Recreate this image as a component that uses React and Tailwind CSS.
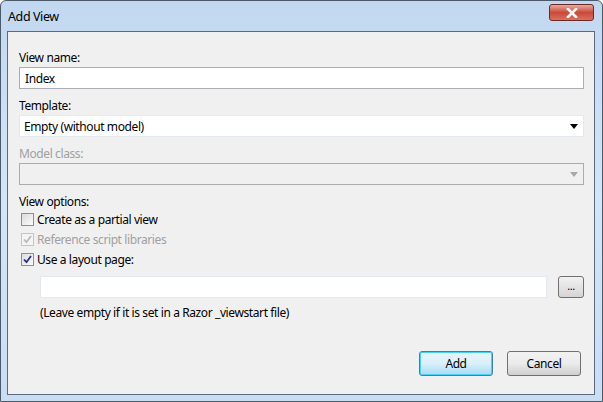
import React from "react";

const font = { fontFamily: '"Noto Sans", "Open Sans", sans-serif' };

function Arrow({ color }) {
  return (
    <svg width="8" height="5" viewBox="0 0 8 5" className="shrink-0">
      <path d="M0 0 H8 L4 5 Z" fill={color} />
    </svg>
  );
}

function Checkbox({ checked, disabled }) {
  return (
    <div
      className={`w-[13px] h-[13px] border flex items-center justify-center shrink-0 ${
        disabled
          ? "border-[#c5c5c5] bg-[#f4f4f4]"
          : "border-[#8f8f8f] bg-gradient-to-br from-[#dcdcdc] to-[#fbfbfb]"
      }`}
    >
      {checked && (
        <svg width="9" height="9" viewBox="0 0 9 9">
          <path
            d="M1 4.5 L3.5 7.2 L8 1"
            fill="none"
            stroke={disabled ? "#b8b8c0" : "#2a2a8a"}
            strokeWidth="1.8"
          />
        </svg>
      )}
    </div>
  );
}

export default function App() {
  return (
    <div
      className="w-[603px] h-[402px] overflow-hidden flex flex-col bg-gradient-to-b from-[#c2d8f0] via-[#d4e5f7] to-[#c9ddf3] border border-[#4b5a6b] rounded-t-[6px] text-[12px] tracking-[-0.4px] text-black"
      style={font}
    >
      {/* Title bar */}
      <div className="h-[30px] shrink-0 flex items-start justify-between pl-[7px] pr-[8px]">
        <span className="mt-[8px] leading-[16px] text-[12.5px] text-black">Add View</span>
        <div className="mt-[3px] w-[45px] h-[17px] rounded-[3px] border border-[#6a2b26] bg-gradient-to-b from-[#e8a89c] via-[#c9493a] to-[#d9705e] flex items-center justify-center">
          <svg width="12" height="10" viewBox="0 0 12 10">
            <path d="M2 1 L10 9 M10 1 L2 9" stroke="#ffffff" strokeWidth="2.6" strokeLinecap="square" />
            <path d="M2 1 L10 9 M10 1 L2 9" stroke="#f4f4f4" strokeWidth="1.4" />
          </svg>
        </div>
      </div>

      {/* Client area */}
      <div className="flex-1 ml-[6px] mr-[7px] mb-[6px] border border-[#5b6a7c] bg-[#f0f0f0] flex flex-col pl-[11px] pr-[10px] pt-[18px]">
        <div className="leading-[15px]">View name:</div>
        <div className="mt-[2px] h-[22px] border border-[#abadb3] bg-white flex items-center pl-[5px] leading-[15px]">
          Index
        </div>

        <div className="mt-[9px] leading-[15px]">Template:</div>
        <div className="mt-[2px] h-[22px] border border-[#e3e9ef] bg-white flex items-center justify-between pl-[4px] pr-[5px] leading-[15px]">
          <span>Empty (without model)</span>
          <Arrow color="#000000" />
        </div>

        <div className="mt-[9px] leading-[15px] text-[#a0a0a0]">Model class:</div>
        <div className="mt-[2px] h-[22px] border border-[#acacac] bg-[#f0f0f0] flex items-center justify-end pr-[5px]">
          <Arrow color="#a8a8a8" />
        </div>

        <div className="mt-[9px] leading-[15px]">View options:</div>
        <div className="h-[20px] flex items-center gap-[3px] pl-[2px]">
          <Checkbox />
          <span className="leading-[15px]">Create as a partial view</span>
        </div>
        <div className="h-[20px] flex items-center gap-[3px] pl-[2px]">
          <Checkbox checked disabled />
          <span className="leading-[15px] text-[#a0a0a0]">Reference script libraries</span>
        </div>
        <div className="h-[20px] flex items-center gap-[3px] pl-[2px]">
          <Checkbox checked />
          <span className="leading-[15px]">Use a layout page:</span>
        </div>

        <div className="mt-[7px] pl-[21px] flex items-center gap-[11px]">
          <div className="flex-1 h-[22px] border border-[#e3e9ef] bg-white" />
          <div className="w-[26px] h-[22px] rounded-[3px] border border-[#707070] bg-gradient-to-b from-[#f2f2f2] to-[#d5d5d5] flex items-center justify-center text-[11px] leading-[11px] pb-[3px]">
            ...
          </div>
        </div>
        <div className="mt-[7px] pl-[21px] leading-[15px]">
          (Leave empty if it is set in a Razor _viewstart file)
        </div>

        <div className="mt-[31px] flex justify-end gap-[14px] pr-[3px]">
          <div className="w-[74px] h-[25px] rounded-[3px] border border-[#3c7fb1] bg-gradient-to-b from-[#eaf6fd] via-[#d9f0fc] to-[#a7d9f5] shadow-[inset_0_0_0_1px_#48d2f8] flex items-center justify-center leading-[15px]">
            Add
          </div>
          <div className="w-[74px] h-[25px] rounded-[3px] border border-[#707070] bg-gradient-to-b from-[#f2f2f2] via-[#ebebeb] to-[#cfcfcf] flex items-center justify-center leading-[15px]">
            Cancel
          </div>
        </div>
      </div>
    </div>
  );
}
